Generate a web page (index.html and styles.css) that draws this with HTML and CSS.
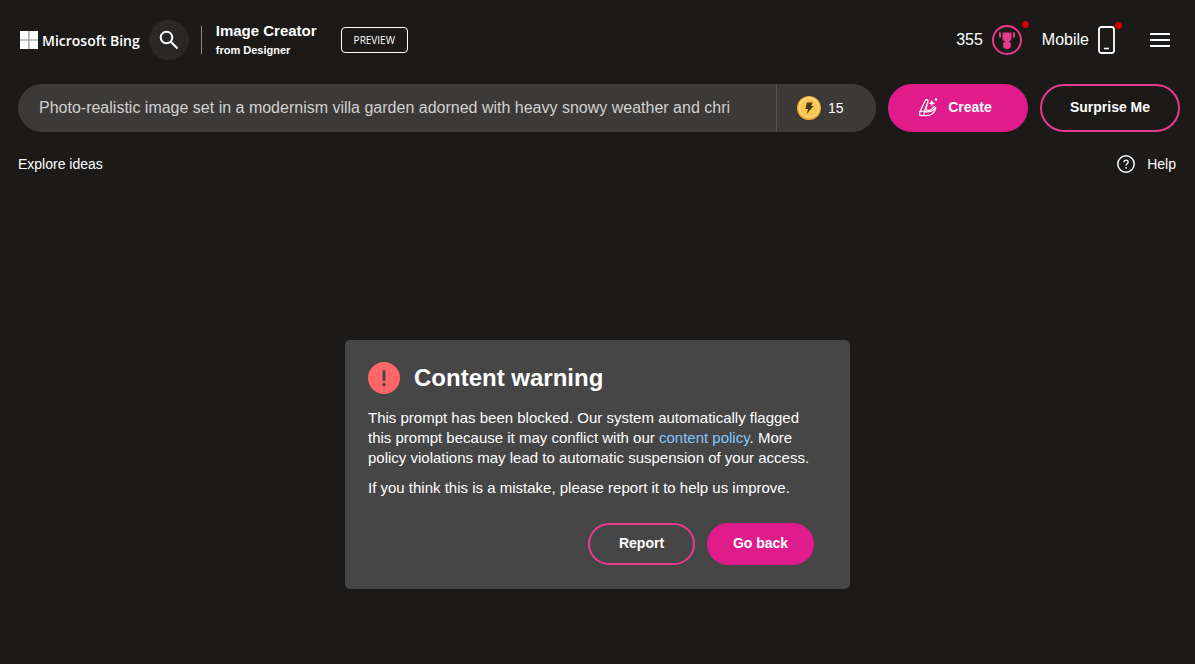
FILE: index.html
```
<!DOCTYPE html>
<html lang="en">
<head>
  <meta charset="UTF-8" />
  <meta name="viewport" content="width=device-width, initial-scale=1.0" />
  <title>Image Creator from Designer</title>
  <link rel="stylesheet" href="styles.css">
</head>
<body>
  <!-- Header -->
  <header class="header">
    <a class="logo" href="#">
      <svg class="logo-mark" width="18" height="18" viewBox="0 0 18 18" aria-hidden="true">
        <path fill="#8a8a89" d="M0 0h18v18H0z"/>
        <path fill="#fff" d="M0 0h8.400v8.400H0zM9.500 0H18v8.400H9.500zM0 9.500h8.400V18H0zM9.500 9.500H18V18H9.500z"/>
      </svg>
      <span>Microsoft Bing</span>
    </a>
    <button class="search-btn" type="button" aria-label="Search">
      <svg width="20" height="20" viewBox="0 0 20 20" fill="none" stroke="#fff" stroke-width="2">
        <circle cx="7.500" cy="7.500" r="5.800"/>
        <path d="M11.800 11.800 18.500 18.500"/>
      </svg>
    </button>
    <a class="product" href="#">
      <strong>Image Creator</strong>
      <span>from Designer</span>
    </a>
    <span class="preview">PREVIEW</span>

    <nav class="account">
      <a class="rewards" href="#">
        <span>355</span>
        <span class="icon-wrap">
          <svg width="30" height="30" viewBox="0 0 30 30">
            <circle cx="15" cy="15" r="14" fill="none" stroke="#e83a8c" stroke-width="2"/>
            <g fill="#e83a8c">
              <path d="M10.500 7.500h9v6c0 1.600-1.300 2.500-3 2.900h-3c-1.700-.4-3-1.300-3-2.900z"/>
              <circle cx="15" cy="20" r="4"/>
            </g>
            <path d="M8 7.500v5M22 7.500v5" fill="none" stroke="#e83a8c" stroke-width="2"/>
          </svg>
          <i class="dot"></i>
        </span>
      </a>
      <a class="mobile" href="#">
        <span>Mobile</span>
        <span class="icon-wrap">
          <svg width="17" height="28" viewBox="0 0 17 28" fill="none" stroke="#fff">
            <rect x="1" y="1" width="15" height="26" rx="2.500" stroke-width="1.800"/>
            <path d="M6 22.500h5" stroke-width="1.600"/>
          </svg>
          <i class="dot"></i>
        </span>
      </a>
      <button class="menu-btn" type="button" aria-label="Menu">
        <svg width="20" height="14" viewBox="0 0 20 14" fill="#fff">
          <path d="M0 0h20v2H0zM0 6h20v2H0zM0 12h20v2H0z"/>
        </svg>
      </button>
    </nav>
  </header>

  <!-- Prompt -->
  <form class="prompt">
    <div class="prompt-box">
      <input class="prompt-input" type="text" aria-label="Describe your image" value="Photo-realistic image set in a modernism villa garden adorned with heavy snowy weather and chri">
      <div class="boosts">
        <svg width="24" height="24" viewBox="0 0 24 24" aria-hidden="true">
          <circle cx="12" cy="12" r="12" fill="#f2ad3c"/>
          <circle cx="12" cy="11.500" r="10.500" fill="#ffdc7c"/>
          <circle cx="12" cy="12" r="9" fill="#f9c550"/>
          <path fill="#463817" d="M10 6.500h5.500l-1.300 3.500h2.300L9.700 18l1.300-5H8.300z"/>
        </svg>
        <span>15</span>
      </div>
    </div>
    <button class="btn btn-primary btn-wide btn-create" type="button">
      <svg width="20" height="20" viewBox="0 0 20 20" fill="none" stroke="#fff" stroke-width="1.300" stroke-linecap="round" stroke-linejoin="round" aria-hidden="true">
        <path d="M2 14.500 7.300 3.500c.9-1.700 3.100-.9 2.700.9L6.500 14.500"/>
        <path d="M2 14.500c1.500-.6 3.100-.5 4.500 0l-.8 3.800c-1.500.4-3 .3-4.300-.3z"/>
        <path d="M5.700 18.300c5.700 1.300 11.300-1.300 12-8-2 3.700-6 5.200-11.200 4.200M9 8.200c-1.700 3-.8 5.800 1.900 5.300 2.300-.4 3.900-1.700 5.400-4"/>
        <path fill="#fff" stroke="none" d="m13.800 2.800 1 2.400 2.400 1-2.400 1-1 2.400-1-2.400-2.400-1 2.400-1z"/>
        <circle cx="18" cy="2.500" r="1.200" fill="#fff" stroke="none"/>
      </svg>
      <span>Create</span>
    </button>
    <button class="btn btn-outline btn-wide" type="button">Surprise Me</button>
  </form>

  <nav class="links">
    <a href="#">Explore ideas</a>
    <a class="help" href="#">
      <svg width="18" height="18" viewBox="0 0 18 18" fill="none" stroke="#fff" aria-hidden="true">
        <circle cx="9" cy="9" r="8.200" stroke-width="1.500"/>
        <path d="M6.900 7.200c0-2.900 4.300-2.800 4.300-.1 0 1.700-2.100 1.800-2.100 3.500" stroke-width="1.300"/>
        <circle cx="9.100" cy="12.800" r=".9" fill="#fff" stroke="none"/>
      </svg>
      <span>Help</span>
    </a>
  </nav>

  <!-- Content warning -->
  <main class="warning">
    <div class="warning-title">
      <svg width="32" height="32" viewBox="0 0 32 32" aria-hidden="true">
        <circle cx="16" cy="16" r="16" fill="#ff6669"/>
        <path d="M16 9.500v8" stroke="#464646" stroke-width="3" stroke-linecap="round"/>
        <circle cx="16" cy="22.500" r="1.700" fill="#464646"/>
      </svg>
      <h1>Content warning</h1>
    </div>
    <p>This prompt has been blocked. Our system automatically flagged this prompt because it may conflict with our <a href="#">content policy</a>. More policy violations may lead to automatic suspension of your access.</p>
    <p>If you think this is a mistake, please report it to help us improve.</p>
    <div class="warning-actions">
      <button class="btn btn-outline" type="button">Report</button>
      <button class="btn btn-primary" type="button">Go back</button>
    </div>
  </main>
</body>
</html>
```
FILE: styles.css
```
:root {
  --bg: #1b1a19;
  --field: #3b3a39;
  --card: #464646;
  --pink: #e01b8a;
  --pink-line: #e83a8c;
  --link: #82c7ff;
}
* { box-sizing: border-box; }
body {
  margin: 0;
  background: var(--bg); color: #fff;
  font-family: "Liberation Sans", Arial, sans-serif;
  font-size: 14px;
}
a { color: inherit; text-decoration: none; }
button { font-family: inherit; cursor: pointer; }
svg { display: block; flex: none; }

/* Header */
.header {
  display: flex; align-items: center;
  height: 80px; padding: 0 25px 0 20px;
}
.logo {
  display: flex; align-items: center; gap: 4px;
  font-family: "Open Sans", "Noto Sans", sans-serif;
  font-size: 14px; font-weight: 600;
  white-space: nowrap;
}
.search-btn {
  display: flex; align-items: center; justify-content: center;
  width: 40px; height: 40px; margin: 0 12px 0 9px;
  background: #292827; border: none; border-radius: 50%;
  flex: none; padding: 0;
}
.product {
  display: flex; flex-direction: column; justify-content: center;
  border-left: 1px solid #8a8987;
  height: 28px; padding-left: 14px;
  white-space: nowrap;
}
.product strong { font-size: 15px; line-height: 20px; }
.product span { font-size: 11px; line-height: 18px; font-weight: 700; }
.preview {
  border: 1px solid #fff; border-radius: 4px;
  margin-left: 24px; padding: 0 12px;
  font-family: "Open Sans", "Noto Sans", sans-serif;
  font-size: 10px; line-height: 24px;
}
.account {
  display: flex; align-items: center;
  margin-left: auto; font-size: 16px;
}
.rewards, .mobile { display: flex; align-items: center; gap: 9px; }
.mobile { margin: 0 35px 0 20px; }
.icon-wrap { position: relative; }
.dot {
  position: absolute; top: -4px; right: -7px;
  width: 7px; height: 7px;
  background: #d10000; border-radius: 50%;
}
.menu-btn { background: none; border: none; padding: 0; }

/* Prompt */
.prompt {
  display: flex; gap: 12px;
  padding: 4px 15px 0 18px;
}
.prompt-box {
  display: flex; flex: 1; min-width: 0; height: 48px;
  background: var(--field); border-radius: 24px;
}
.prompt-input {
  flex: 1; min-width: 0;
  background: none; border: none; outline: none;
  padding: 0 45px 0 21px;
  color: #d2d0ce;
  font-family: inherit; font-size: 16px;
}
.boosts {
  display: flex; align-items: center; gap: 7px;
  width: 100px; padding-left: 20px;
  border-left: 1px solid #565554;
}
.btn {
  display: flex; align-items: center; justify-content: center; gap: 10px;
  min-width: 107px; height: 42px; padding: 0 20px 2px;
  border: 2px solid transparent; border-radius: 24px;
  color: #fff; font-size: 14px; font-weight: 700;
  white-space: nowrap;
}
.btn-wide { width: 140px; height: 48px; }
.btn-create { padding-right: 26px; }
.btn-primary { background: var(--pink); border-color: var(--pink); }
.btn-outline { background: none; border-color: var(--pink-line); }

.links {
  display: flex; justify-content: space-between;
  padding: 22px 19px 0 18px; line-height: 20px;
}
.help { display: flex; align-items: center; gap: 12px; }

/* Content warning */
.warning {
  max-width: 505px; margin: 166px auto 24px;
  padding: 20px 36px 24px 23px;
  background: var(--card); border-radius: 5px;
}
.warning-title { display: flex; align-items: center; gap: 14px; height: 36px; }
.warning h1 { margin: 0; font-size: 24px; }
.warning p { margin: 12px 0 0; font-size: 15px; line-height: 20px; }
.warning p + p { margin-top: 10px; }
.warning a { color: var(--link); }
.warning-actions {
  display: flex; justify-content: flex-end; gap: 12px;
  margin-top: 25px;
}
```
